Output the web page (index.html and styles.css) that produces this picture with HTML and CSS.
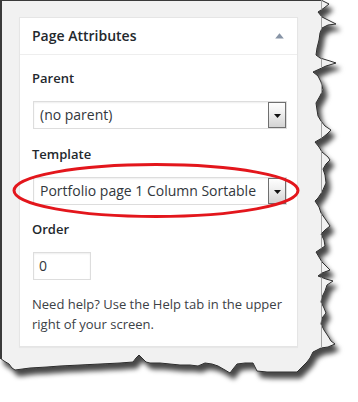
FILE: index.html
```html
<!DOCTYPE html>
<html lang="en">
<head>
<meta charset="utf-8">
<title>Page Attributes</title>
<link rel="stylesheet" href="styles.css">
</head>
<body>
<div class="frame">
  <svg class="paper" width="358" height="402" viewBox="0 0 358 402" aria-hidden="true">
    <defs>
      <filter id="sh" x="-10%" y="-10%" width="130%" height="130%">
        <feDropShadow dx="4" dy="6" stdDeviation="2.5" flood-color="#000" flood-opacity="0.72"/>
      </filter>
      <clipPath id="paperclip">
        <path d="M0,0 L321,0 L329,4 L324,8 L318,12 L322,17 L330,21 L336,24 L328,25 L322,28 L320,33 L319,40 L317,48 L316,55 L320,58 L330,61 L336,63 L326,66 L313,72 L318,76 L321,82 L323,90 L320,96 L316,103 L317,110 L318,116 L321,121 L325,126 L331,130 L327,134 L322,138 L315,142 L319,147 L322,152 L328,157 L330,160 L326,164 L323,169 L325,175 L326,183 L322,192 L318,198 L315,201 L319,207 L321,213 L326,220 L330,226 L325,230 L321,234 L324,240 L325,246 L316,252 L319,257 L322,262 L327,267 L330,270 L322,273 L318,276 L326,279 L333,281 L327,285 L325,291 L322,297 L321,302 L324,308 L326,313 L322,318 L321,324 L324,330 L328,336 L331,341 L335,344 L328,347 L321,348 L313,352 L310,358 L307,362 L297,372 L280,372 L267,372 L257,371 L253,363 L245,363 L237,364 L233,369 L230,373 L225,370 L218,366 L212,364 L205,363 L198,366 L190,365 L180,365 L170,364 L160,363 L150,363 L146,362 L142,358 L139,355 L136,358 L133,362 L120,363 L110,363.5 L100,364 L80,365 L60,366 L47,367 L30,368 L15,370 L12,368 L9,364 L4,361 L0,358 Z"/>
      </clipPath>
    </defs>
    <path class="paper-fill" filter="url(#sh)" d="M0,0 L321,0 L329,4 L324,8 L318,12 L322,17 L330,21 L336,24 L328,25 L322,28 L320,33 L319,40 L317,48 L316,55 L320,58 L330,61 L336,63 L326,66 L313,72 L318,76 L321,82 L323,90 L320,96 L316,103 L317,110 L318,116 L321,121 L325,126 L331,130 L327,134 L322,138 L315,142 L319,147 L322,152 L328,157 L330,160 L326,164 L323,169 L325,175 L326,183 L322,192 L318,198 L315,201 L319,207 L321,213 L326,220 L330,226 L325,230 L321,234 L324,240 L325,246 L316,252 L319,257 L322,262 L327,267 L330,270 L322,273 L318,276 L326,279 L333,281 L327,285 L325,291 L322,297 L321,302 L324,308 L326,313 L322,318 L321,324 L324,330 L328,336 L331,341 L335,344 L328,347 L321,348 L313,352 L310,358 L307,362 L297,372 L280,372 L267,372 L257,371 L253,363 L245,363 L237,364 L233,369 L230,373 L225,370 L218,366 L212,364 L205,363 L198,366 L190,365 L180,365 L170,364 L160,363 L150,363 L146,362 L142,358 L139,355 L136,358 L133,362 L120,363 L110,363.5 L100,364 L80,365 L60,366 L47,367 L30,368 L15,370 L12,368 L9,364 L4,361 L0,358 Z"/>
    <line class="win-edge" x1="321.5" y1="0" x2="321.5" y2="352" clip-path="url(#paperclip)"/>
    <line class="edge-left" x1="1" y1="0" x2="1" y2="359"/>
    <line class="edge-top" x1="0" y1="0.5" x2="321" y2="0.5"/>
  </svg>

  <div class="content">
    <div class="panel">
      <div class="panel-head">
        <h2 class="panel-title">Page Attributes</h2>
        <svg class="toggle" width="9" height="6" viewBox="0 0 9 6" aria-hidden="true"><path d="M4.5,0.2 L8.8,5.6 L0.2,5.6 Z"/></svg>
      </div>
      <div class="panel-body">
        <p class="label label-first">Parent</p>
        <div class="select">
          <span class="select-text">(no parent)</span>
          <span class="select-btn"><svg width="7" height="4" viewBox="0 0 7 4" aria-hidden="true"><path d="M0,0 H7 L3.5,4 Z"/></svg></span>
        </div>
        <p class="label label-after-select">Template</p>
        <div class="select">
          <span class="select-text">Portfolio page 1 Column Sortable</span>
          <span class="select-btn"><svg width="7" height="4" viewBox="0 0 7 4" aria-hidden="true"><path d="M0,0 H7 L3.5,4 Z"/></svg></span>
        </div>
        <p class="label label-order">Order</p>
        <div class="order">0</div>
        <p class="help">Need help? Use the Help tab in the upper right of your screen.</p>
      </div>
    </div>
  </div>

  <svg class="annotation" width="292" height="58" viewBox="0 0 292 58" aria-hidden="true">
    <ellipse cx="144" cy="28.5" rx="142" ry="26"/>
  </svg>
</div>
</body>
</html>
```

FILE: styles.css
```css
html, body {
  margin: 0;
  padding: 0;
  background: #ffffff;
}

body {
  font-family: "Open Sans", "Liberation Sans", Arial, sans-serif;
  color: #23282d;
}

.frame {
  position: relative;
  display: grid;
  width: 358px;
  height: 402px;
  overflow: hidden;
}

.paper {
  grid-area: 1 / 1;
  display: block;
}

.paper-fill {
  fill: #f1f1f1;
  stroke: #2e2e2e;
  stroke-width: 1;
  stroke-linejoin: miter;
}

.win-edge {
  stroke: #a3a3a3;
  stroke-width: 1;
}

.edge-left {
  stroke: #3a3a3a;
  stroke-width: 2;
}

.edge-top {
  stroke: #3a3a3a;
  stroke-width: 1;
}

.content {
  grid-area: 1 / 1;
  padding: 17px 0 0 19px;
}

.panel {
  width: 279px;
  height: 330px;
  box-sizing: border-box;
  background: #ffffff;
  border: 1px solid #e5e5e5;
  box-shadow: 0 1px 1px rgba(0, 0, 0, 0.04);
}

.panel-head {
  height: 36px;
  border-bottom: 1px solid #eeeeee;
  display: flex;
  align-items: center;
  justify-content: space-between;
  padding: 0 13px 0 12px;
}

.panel-title {
  margin: 0;
  font-size: 14px;
  font-weight: 600;
  line-height: 20px;
  color: #23282d;
}

.toggle {
  display: block;
  fill: #8794a6;
}

.panel-body {
  padding: 0 9px 0 12px;
}

.label {
  margin: 0;
  font-size: 13px;
  font-weight: 600;
  line-height: 18px;
  color: #23282d;
}

.label-first {
  margin-top: 14px;
}

.label-after-select {
  margin-top: 16px;
}

.label-order {
  margin-top: 15px;
}

.select {
  margin: 14px 1px 0;
  height: 28px;
  box-sizing: border-box;
  border: 1px solid #dddddd;
  background: #ffffff;
  box-shadow: inset 0 1px 2px rgba(0, 0, 0, 0.07);
  display: flex;
  align-items: center;
  justify-content: space-between;
  padding-left: 6px;
  font-size: 14px;
  line-height: 20px;
  color: #32373c;
}

.select-text {
  white-space: nowrap;
}

.select-btn {
  width: 18px;
  height: 26px;
  box-sizing: border-box;
  border: 1px solid #6f6f6f;
  background: linear-gradient(#fefefe, #f2f2f2 35%, #d3d3d3);
  display: flex;
  align-items: center;
  justify-content: center;
}

.select-btn svg {
  display: block;
  fill: #111111;
  margin-top: 1px;
}

.order {
  margin: 14px 0 0 1px;
  width: 58px;
  height: 28px;
  box-sizing: border-box;
  border: 1px solid #dddddd;
  box-shadow: inset 0 1px 2px rgba(0, 0, 0, 0.07);
  padding-left: 5px;
  display: flex;
  align-items: center;
  font-size: 14px;
  line-height: 20px;
  color: #32373c;
}

.help {
  margin: 14px 0 0;
  font-size: 13px;
  line-height: 20px;
  color: #3c4146;
}

.annotation {
  position: absolute;
  left: 12px;
  top: 162px;
  overflow: visible;
}

.annotation ellipse {
  fill: none;
  stroke: #e3161c;
  stroke-width: 3;
}
```
